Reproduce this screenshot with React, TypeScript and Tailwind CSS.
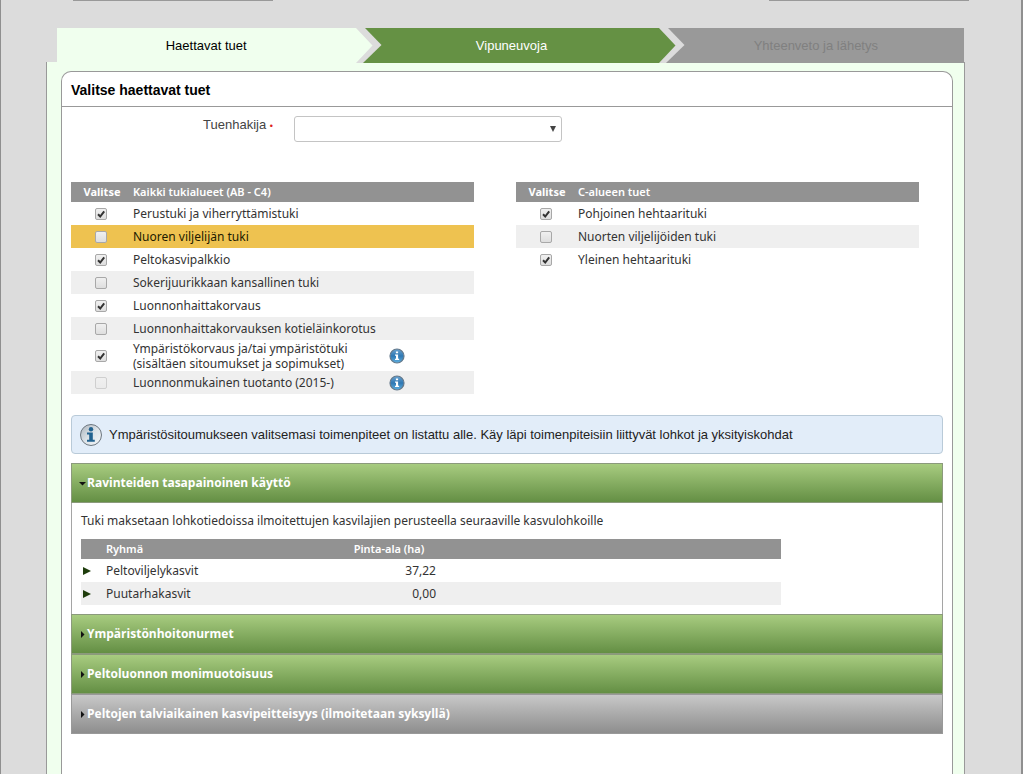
import React, { useState } from "react";

type Support = { id: string; name: string; second?: string; checked?: boolean; highlight?: boolean; disabled?: boolean; info?: boolean };

const allAreas: Support[] = [
  { id: "perustuki", name: "Perustuki ja viherryttämistuki", checked: true },
  { id: "nuoren", name: "Nuoren viljelijän tuki", highlight: true },
  { id: "peltokasvi", name: "Peltokasvipalkkio", checked: true },
  { id: "sokeri", name: "Sokerijuurikkaan kansallinen tuki" },
  { id: "luonnonhaitta", name: "Luonnonhaittakorvaus", checked: true },
  { id: "kotielain", name: "Luonnonhaittakorvauksen kotieläinkorotus" },
  { id: "ymparisto", name: "Ympäristökorvaus ja/tai ympäristötuki", second: "(sisältäen sitoumukset ja sopimukset)", checked: true, info: true },
  { id: "luomu", name: "Luonnonmukainen tuotanto (2015-)", disabled: true, info: true },
];

const cArea: Support[] = [
  { id: "pohjoinen", name: "Pohjoinen hehtaarituki", checked: true },
  { id: "nuorten", name: "Nuorten viljelijöiden tuki" },
  { id: "yleinen", name: "Yleinen hehtaarituki", checked: true },
];

function StepArrow({ from }: { from: string }) {
  return (
    <svg className="absolute top-0 -left-1" width="28" height="35" viewBox="0 0 28 35" aria-hidden="true">
      <path d="M0 0H10L26.500 17L8 35H0Z" fill="#dcdcdc" />
      <path d="M0 0H1L17.500 17.500L1 35H0Z" fill={from} />
    </svg>
  );
}

function SmallInfo() {
  return (
    <svg width="16" height="16" viewBox="0 0 16 16" aria-hidden="true">
      <defs>
        <linearGradient id="smallInfo" x1="0" y1="0" x2="0" y2="1">
          <stop offset="0" stopColor="#6ba3d0" />
          <stop offset="0.5" stopColor="#2f78b3" />
          <stop offset="1" stopColor="#5fb0e0" />
        </linearGradient>
      </defs>
      <circle cx="8" cy="8" r="7" fill="url(#smallInfo)" stroke="#64788a" strokeWidth="1.2" />
      <path d="M6.9 3.5h2.2v1.8H6.9zM6 6.5h3.1v4.2h1V12H6v-1.300h1V7.700H6z" fill="#fff" />
    </svg>
  );
}

function LargeInfo() {
  return (
    <svg className="shrink-0" width="24" height="24" viewBox="0 0 24 24" aria-hidden="true">
      <defs>
        <linearGradient id="largeInfo" x1="0" y1="0" x2="1" y2="1">
          <stop offset="0" stopColor="#a9b2ba" />
          <stop offset="0.5" stopColor="#dde3e8" />
          <stop offset="1" stopColor="#f4f7f9" />
        </linearGradient>
      </defs>
      <circle cx="12" cy="12" r="10.500" fill="url(#largeInfo)" stroke="#6d7780" strokeWidth="1" />
      <circle cx="12" cy="6.300" r="2.200" fill="#22628f" />
      <path d="M8 9.500h5.800v7.300h2v2H8v-2h2.200v-5.300H8z" fill="#22628f" />
    </svg>
  );
}

function SupportTable({ title, rows }: { title: string; rows: Support[] }) {
  return (
    <table className="w-full table-fixed self-start text-left text-[12px] leading-[15px] text-[#333]">
      <colgroup>
        <col className="w-[62px]" />
        <col className="w-[248px]" />
        <col />
      </colgroup>
      <thead className="bg-[#929292] text-[11px] text-white">
        <tr className="h-5">
          <th className="pb-0.5 text-center font-bold">Valitse</th>
          <th className="pb-0.5 font-semibold" colSpan={2}>{title}</th>
        </tr>
      </thead>
      <tbody>
        {rows.map((row) => (
          <tr
            key={row.id}
            className={row.highlight ? "h-[23px] bg-[#eec250] text-[#221a00]" : row.second ? "h-[31px]" : "h-[23px] even:bg-[#efefef]"}
          >
            <td>
              <span className="ml-6 grid w-3 place-items-center">
                <input
                  id={row.id}
                  type="checkbox"
                  defaultChecked={row.checked}
                  disabled={row.disabled}
                  className="peer col-start-1 row-start-1 size-3 appearance-none rounded-[2px] border border-[#a8a8a8] bg-linear-to-b from-[#f0f0f0] to-[#dedede] disabled:border-[#cfcfcf] disabled:from-[#f0f0f0] disabled:to-[#ebebeb]"
                />
                <svg className="pointer-events-none col-start-1 row-start-1 hidden peer-checked:block" width="12" height="12" viewBox="0 0 12 12" aria-hidden="true">
                  <path d="M3 6.300L5.200 8.500L9.200 3.300" fill="none" stroke="#333" strokeWidth="2" />
                </svg>
              </span>
            </td>
            <td className="whitespace-nowrap">
              <label htmlFor={row.id}>
                {row.name}
                {row.second && <span className="block">{row.second}</span>}
              </label>
            </td>
            <td>
              {row.info && (
                <button type="button" aria-label="Lisätietoja" className="ml-2 block">
                  <SmallInfo />
                </button>
              )}
            </td>
          </tr>
        ))}
      </tbody>
    </table>
  );
}

function Section({ title, initial = false, muted = false, children }: { title: string; initial?: boolean; muted?: boolean; children?: React.ReactNode }) {
  const [open, setOpen] = useState(initial);
  return (
    <section>
      <h2 className="font-['Open_Sans','Trebuchet_MS',sans-serif]">
        <button
          type="button"
          aria-expanded={open}
          onClick={() => setOpen(!open)}
          className={
            muted
              ? "flex h-10 w-full items-center border border-[#999] bg-linear-to-b from-[#c8c8c8] to-[#8e8e8e] pl-[7px] text-[12px] font-bold text-white"
              : "flex h-10 w-full items-center border border-[#8b9a7c] bg-linear-to-b from-[#a8cc80] to-[#648f44] pl-[7px] text-[12px] font-bold text-white"
          }
        >
          <svg className="mr-px" width="7" height="7" viewBox="0 0 7 7" aria-hidden="true">
            <path d={open ? "M0 2H7L3.500 5.500Z" : "M2 0V7L5.500 3.500Z"} fill="#111" />
          </svg>
          {title}
        </button>
      </h2>
      {open && children && <div className="border-x border-[#a5a5a5] px-[9px] pt-2.5 pb-[9px]">{children}</div>}
    </section>
  );
}

export default function App() {
  return (
    <div className="flex min-h-screen flex-col border-r-2 border-l border-[#8f8f8f] bg-[#dcdcdc] pr-14 pl-[45px] font-['Liberation_Sans',Arial,sans-serif] text-[13px]">
      <div className="-mr-1 ml-[27px] flex justify-between">
        <div className="h-px w-[200px] bg-[#999]" />
        <div className="h-px w-[200px] bg-[#999]" />
      </div>
      <nav className="z-10 mt-[27px] mr-px -mb-px ml-[11px]">
        <ol className="grid h-[35px] grid-cols-3 text-center leading-[35px]">
          <li className="bg-[#f0ffee] pr-1 text-black">
            <a href="#tuet">Haettavat tuet</a>
          </li>
          <li className="relative bg-[#659144] pl-0.5 text-white">
            <StepArrow from="#f0ffee" />
            <a href="#vipuneuvoja">Vipuneuvoja</a>
          </li>
          <li className="relative bg-[#999] pl-1.5 text-[#808080]">
            <StepArrow from="#659144" />
            <a href="#yhteenveto">Yhteenveto ja lähetys</a>
          </li>
        </ol>
      </nav>

      <main className="flex flex-1 flex-col border-x border-[#999] bg-[#f0ffee] pt-[9px] pr-[11px] pl-3.5">
        <div className="flex-1 rounded-t-[10px] border border-b-0 border-[#999] bg-white">
          <h1 className="h-[35px] border-b border-[#999] pl-[9px] text-[14px] leading-[36px] font-bold text-black">Valitse haettavat tuet</h1>

          <div className="px-[9px] pt-[9px]">
            <div className="flex">
              <label htmlFor="hakija" className="w-[223px] pr-[21px] text-right leading-[18px] text-[#444]">
                Tuenhakija <span className="text-[9px] text-[#d22]">•</span>
              </label>
              <div className="relative">
                <select id="hakija" className="block h-[26px] w-[268px] appearance-none rounded-[3px] border border-[#c4c4c4] bg-white px-2">
                  <option></option>
                </select>
                <svg className="pointer-events-none absolute top-2.5 right-1.5" width="6" height="6" viewBox="0 0 6 6" aria-hidden="true">
                  <path d="M0 0H6L3 6Z" fill="#444" />
                </svg>
              </div>
            </div>

            <div className="mt-10 mr-6 grid grid-cols-2 gap-[42px] font-['Noto_Sans','Trebuchet_MS',sans-serif]">
              <SupportTable title="Kaikki tukialueet (AB - C4)" rows={allAreas} />
              <SupportTable title="C-alueen tuet" rows={cArea} />
            </div>

            <p className="mt-[21px] flex h-[39px] items-center gap-1.5 rounded-[4px] border border-[#b9cad8] bg-[#e2edf9] pl-[7px] text-[#222]">
              <LargeInfo />
              Ympäristösitoumukseen valitsemasi toimenpiteet on listattu alle. Käy läpi toimenpiteisiin liittyvät lohkot ja yksityiskohdat
            </p>

            <div className="mt-[9px] font-['Noto_Sans','Trebuchet_MS',sans-serif]">
              <Section title="Ravinteiden tasapainoinen käyttö" initial>
                <p className="text-[12px] leading-[16px] text-[#333]">Tuki maksetaan lohkotiedoissa ilmoitettujen kasvilajien perusteella seuraaville kasvulohkoille</p>
                <table className="mt-2.5 w-full max-w-[700px] table-fixed text-left text-[12px] text-[#333]">
                  <colgroup>
                    <col className="w-[25px]" />
                    <col className="w-[236px]" />
                    <col className="w-[94px]" />
                    <col />
                  </colgroup>
                  <thead className="bg-[#929292] text-[11px] text-white">
                    <tr className="h-5 leading-[15px]">
                      <td></td>
                      <th className="pb-0.5 font-semibold">Ryhmä</th>
                      <th className="pb-0.5 text-center font-semibold">Pinta-ala (ha)</th>
                      <td></td>
                    </tr>
                  </thead>
                  <tbody>
                    {[["Peltoviljelykasvit", "37,22"], ["Puutarhakasvit", "0,00"]].map(([name, area]) => (
                      <tr key={name} className="h-[23px] leading-[15px] even:bg-[#efefef]">
                        <td>
                          <button type="button" aria-label={name} className="ml-0.5 block">
                            <svg width="8" height="8" viewBox="0 0 8 8" aria-hidden="true">
                              <path d="M0 0L8 4L0 8Z" fill="#1f3d0c" />
                            </svg>
                          </button>
                        </td>
                        <td>{name}</td>
                        <td className="text-right">{area}</td>
                        <td></td>
                      </tr>
                    ))}
                  </tbody>
                </table>
              </Section>
              <Section title="Ympäristönhoitonurmet" />
              <Section title="Peltoluonnon monimuotoisuus" />
              <Section title="Peltojen talviaikainen kasvipeitteisyys (ilmoitetaan syksyllä)" muted />
            </div>
          </div>
        </div>
      </main>
    </div>
  );
}
